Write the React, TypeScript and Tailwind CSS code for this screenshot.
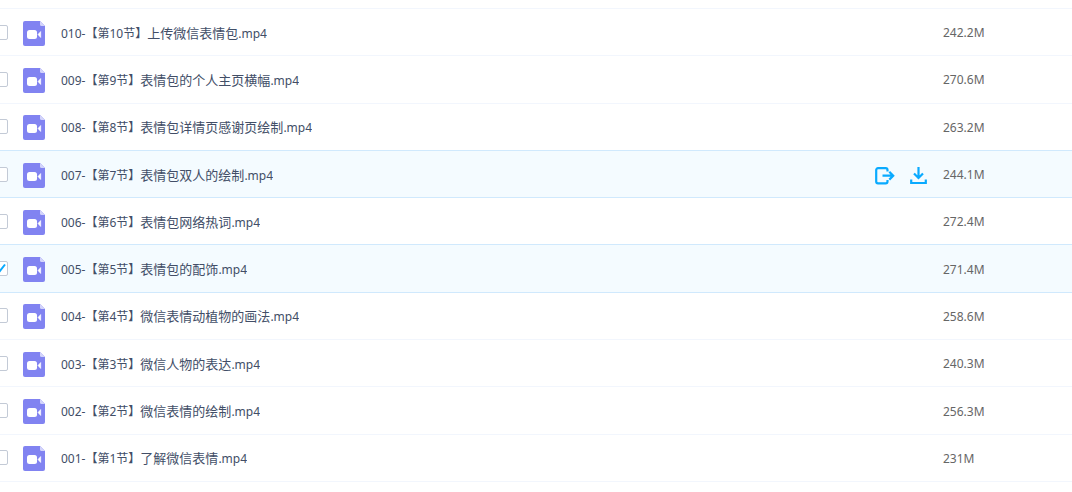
import { useState } from "react";

const files = [
  { no: "010", part: "10", title: "上传微信表情包", size: "242.2M" },
  { no: "009", part: "9", title: "表情包的个人主页横幅", size: "270.6M" },
  { no: "008", part: "8", title: "表情包详情页感谢页绘制", size: "263.2M" },
  { no: "007", part: "7", title: "表情包双人的绘制", size: "244.1M" },
  { no: "006", part: "6", title: "表情包网络热词", size: "272.4M" },
  { no: "005", part: "5", title: "表情包的配饰", size: "271.4M" },
  { no: "004", part: "4", title: "微信表情动植物的画法", size: "258.6M" },
  { no: "003", part: "3", title: "微信人物的表达", size: "240.3M" },
  { no: "002", part: "2", title: "微信表情的绘制", size: "256.3M" },
  { no: "001", part: "1", title: "了解微信表情", size: "231M" },
];

function VideoIcon() {
  return (
    <svg width="22" height="25" viewBox="0 0 22 25" className="block shrink-0">
      <path d="M2 0H17l5 5v18a2 2 0 0 1-2 2H2a2 2 0 0 1-2-2V2a2 2 0 0 1 2-2z" fill="#8183f1" />
      <path d="M17 0l5 5h-3.500A1.500 1.500 0 0 1 17 3.500z" fill="#d3d4fb" />
      <rect x="4" y="9" width="10" height="9" rx="2.500" fill="#fff" />
      <path d="M15 13.500L17.700 10.500v6z" fill="#fff" stroke="#fff" strokeWidth="0.600" strokeLinejoin="round" />
    </svg>
  );
}

function ShareIcon() {
  return (
    <svg width="20" height="18" viewBox="0 0 20 18" fill="none" stroke="#09aaff" strokeWidth="2.200" className="block">
      <path d="M12.500 4.500V3A1.800 1.800 0 0 0 10.700 1.200H3A1.800 1.800 0 0 0 1.200 3v11.500A1.800 1.800 0 0 0 3 16.300h7.700a1.800 1.800 0 0 0 1.800-1.800V13" />
      <path d="M7.500 8.700H18M14.300 4.800l3.900 3.900-3.900 3.900" />
    </svg>
  );
}

function DownloadIcon() {
  return (
    <svg width="17" height="18" viewBox="0 0 17 18" fill="none" stroke="#09aaff" strokeWidth="2.200" className="block">
      <path d="M8.500 0v11M4 6.500l4.500 4.500L13 6.500" />
      <path d="M1.200 12.500V16h14.600v-3.500" />
    </svg>
  );
}

function App() {
  const [selected, setSelected] = useState<string[]>(["005"]);
  const [hovered, setHovered] = useState("007");

  const isActive = (no?: string) => !!no && (no === hovered || selected.includes(no));

  const toggle = (no: string) => {
    setSelected(selected.includes(no) ? selected.filter((n) => n !== no) : [...selected, no]);
  };

  return (
    <main className="overflow-x-hidden bg-white pt-2 font-['Noto_Sans','Noto_Sans_CJK_SC',sans-serif] text-xs">
      <table className="h-[calc(100vh-18px)] w-full table-fixed border-collapse border-t border-[#f2f6fd]">
        <colgroup>
          <col className="w-[23px]" />
          <col />
          <col className="w-[68px]" />
          <col className="w-[129px]" />
        </colgroup>
        <tbody>
          {files.map((file, i) => {
            const active = isActive(file.no);
            const line = active || isActive(files[i + 1]?.no);
            return (
              <tr
                key={file.no}
                onMouseEnter={() => setHovered(file.no)}
                className={`border-b ${line ? "border-[#d0e9fd]" : "border-[#f2f6fd]"} ${active ? "bg-[#f4fbff]" : "bg-white"}`}
              >
                <td className="p-0">
                  <div className="relative -ml-[7px] size-[15px]">
                    <input
                      id={`file-${file.no}`}
                      type="checkbox"
                      checked={selected.includes(file.no)}
                      onChange={() => toggle(file.no)}
                      className="peer block size-full appearance-none rounded-xs border border-[#c3cad6] bg-white"
                    />
                    <svg viewBox="0 0 15 15" fill="none" className="pointer-events-none absolute inset-0 hidden peer-checked:block">
                      <path d="M3 7.500l3.200 3.500L12 3.500" stroke="#09aaff" strokeWidth="2" />
                    </svg>
                  </div>
                </td>
                <td className="p-0 pt-0.5">
                  <div className="flex items-center gap-4">
                    <VideoIcon />
                    <label htmlFor={`file-${file.no}`} className="truncate leading-5 text-[#424e67]">
                      {file.no}-【第{file.part}节】<span className="text-[13px]">{file.title}</span>.mp4
                    </label>
                  </div>
                </td>
                <td className="p-0 pt-1">
                  {file.no === hovered && (
                    <div className="flex items-center gap-[15px]">
                      <button type="button" aria-label="分享">
                        <ShareIcon />
                      </button>
                      <button type="button" aria-label="下载">
                        <DownloadIcon />
                      </button>
                    </div>
                  )}
                </td>
                <td className="p-0 pt-0.5 leading-5 text-[#666]">{file.size}</td>
              </tr>
            );
          })}
        </tbody>
      </table>
    </main>
  );
}

export default App;
